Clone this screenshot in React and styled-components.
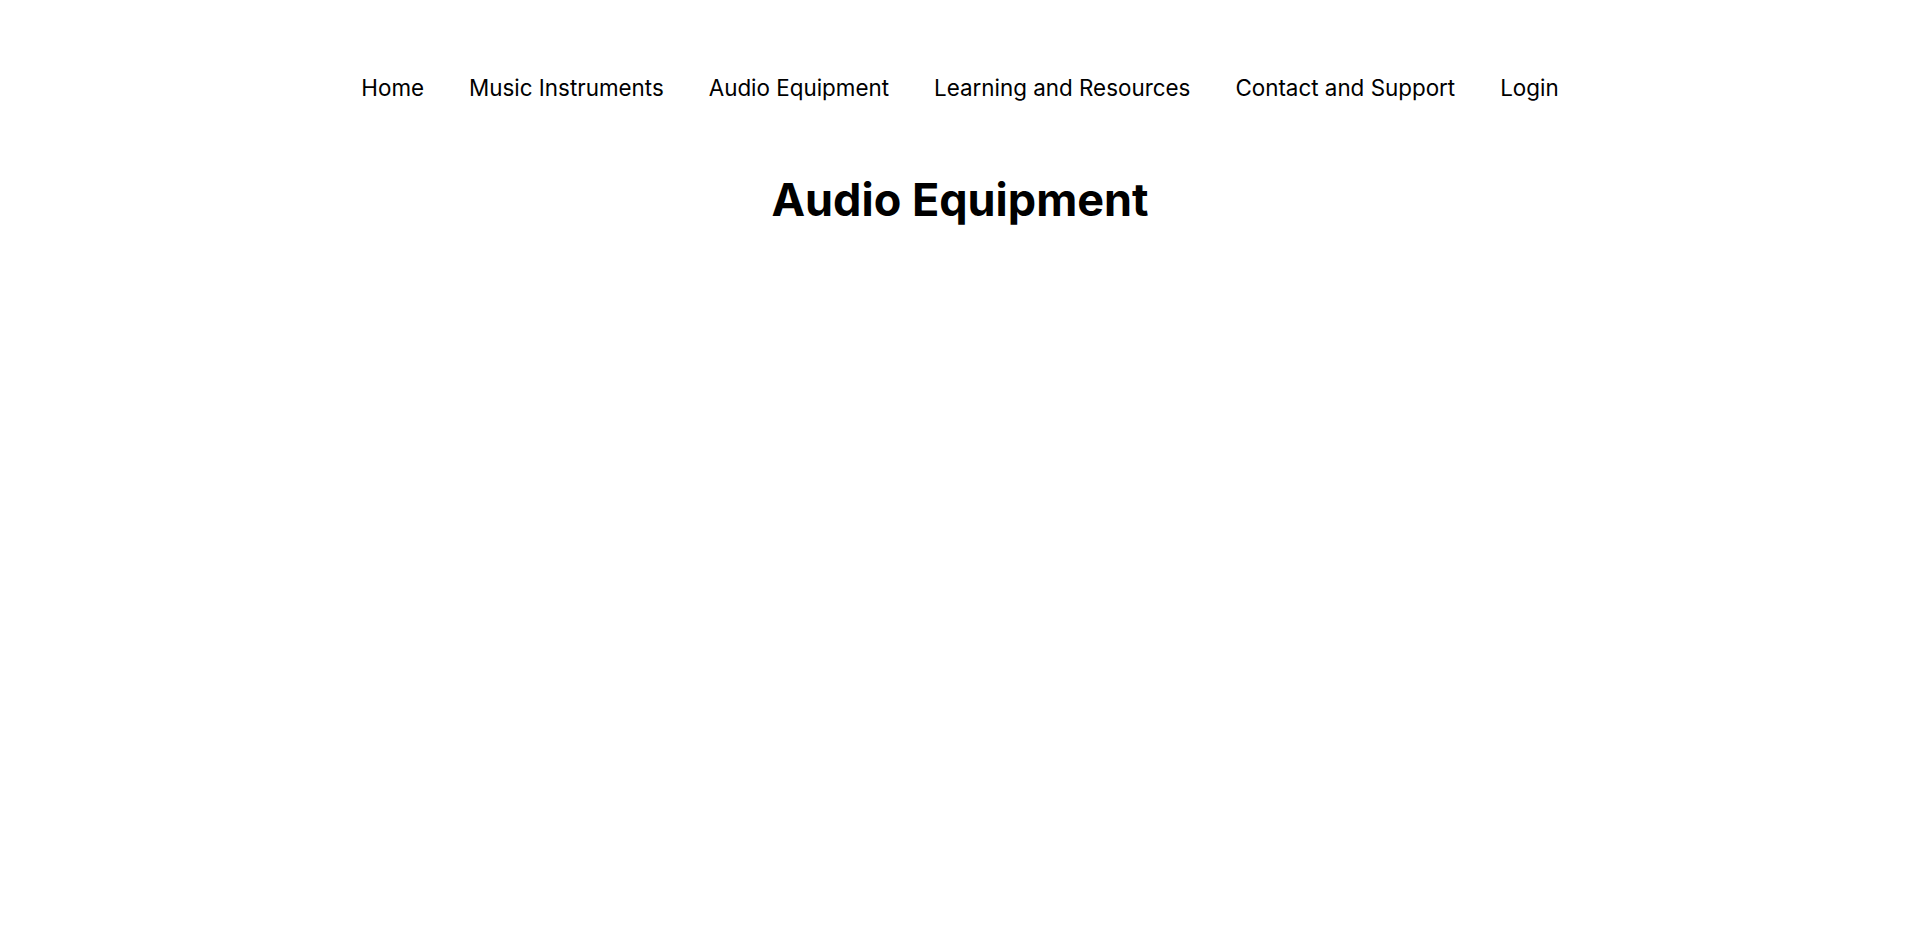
import styled, { createGlobalStyle } from "styled-components";

const GlobalStyle = createGlobalStyle`
  body {
    margin: 0;
    background: #ffffff;
    color: #000000;
    font-family: Inter, "Noto Sans", sans-serif;
  }
`;

const links = [
  "Home",
  "Music Instruments",
  "Audio Equipment",
  "Learning and Resources",
  "Contact and Support",
  "Login",
];

const App = () => {
  return (
    <>
      <GlobalStyle />
      <Page>
        <Nav>
          {links.map((link) => (
            <NavLink key={link} href="#">
              {link}
            </NavLink>
          ))}
        </Nav>
        <Title>Audio Equipment</Title>
      </Page>
    </>
  );
};

export default App;

const Page = styled.div`
  display: flex;
  flex-direction: column;
  align-items: center;
  padding-top: 72px;
`;

const Nav = styled.nav`
  display: flex;
  justify-content: center;
  gap: 45px;
`;

const NavLink = styled.a`
  font-size: 22.4px;
  font-weight: 400;
  line-height: 32px;
  color: #000;
  text-decoration: none;
`;

const Title = styled.h1`
  margin: 67px 0 0;
  font-size: 45px;
  font-weight: 700;
  line-height: 58px;
  text-align: center;
`;
